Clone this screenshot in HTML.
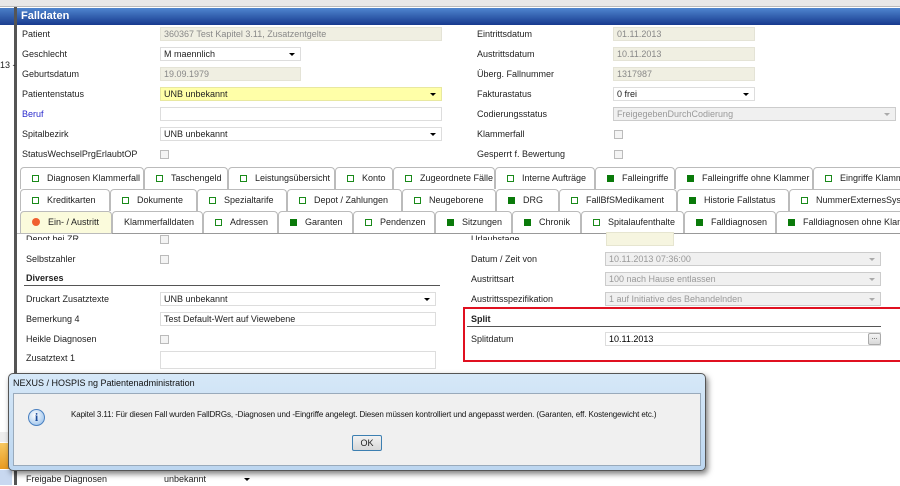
<!DOCTYPE html>
<html><head><style>
*{box-sizing:border-box;margin:0;padding:0}
body{width:900px;height:485px;overflow:hidden;background:#fff;font-family:"Liberation Sans",sans-serif;font-size:9px;color:#222;position:relative}
.a{position:absolute;white-space:nowrap}
.inp{position:absolute;height:14px;border:1px solid #ddd;background:#fff;padding:1px 3px;font-size:9px;line-height:11px}
.ro{background:#f0efe2;color:#888;border-color:#e4e3d6}
.dis{background:#f0f0f0;color:#999;border-color:#ccc}
.arr::after{content:"";position:absolute;right:5px;top:5px;border:3px solid transparent;border-top:3px solid #000;border-bottom:0}
.dis.arr::after{border-top-color:#aaa}
.cb{position:absolute;width:9px;height:9px;border:1px solid #bbb;background:#f4f4f4}
.tab{position:absolute;height:22px;border:1px solid #bbb;border-bottom:none;border-radius:4px 4px 0 0;background:#fff;font-size:9px;line-height:21px;white-space:nowrap;overflow:hidden}
.tab i{display:inline-block;width:7px;height:7px;border:1.5px solid #1a8a1a;margin:0 8px 0 11px;vertical-align:-1px}
.tab i.f{background:#0a7a0a;border-color:#0a7a0a}
</style></head><body>
<div class="a" style="left:0;top:0;width:900px;height:7px;background:#e8e8e8;border-bottom:1px solid #bbb"></div>
<div class="a" style="left:0;top:8px;width:14px;height:17px;background:linear-gradient(#4a7fc8,#1c3f8f)"></div>
<div class="a" style="left:14px;top:7px;width:3px;height:478px;background:#555"></div>
<div class="a" style="left:17px;top:8px;width:883px;height:17px;background:linear-gradient(#4f86cf,#173a8e);color:#fff;font-weight:bold;font-size:11px;padding:2px 4px">Falldaten</div>
<div class="a" style="left:0;top:60px;font-size:9px">13 -</div>

<div class="a" style="left:22px;top:29px">Patient</div><div class="inp ro" style="left:160px;top:27px;width:282px">360367 Test Kapitel 3.11,  Zusatzentgelte</div>
<div class="a" style="left:22px;top:49px">Geschlecht</div><div class="inp arr" style="left:160px;top:47px;width:141px">M maennlich</div>
<div class="a" style="left:22px;top:69px">Geburtsdatum</div><div class="inp ro" style="left:160px;top:67px;width:141px">19.09.1979</div>
<div class="a" style="left:22px;top:89px">Patientenstatus</div><div class="inp arr" style="left:160px;top:87px;width:282px;background:#ffffa8;border-color:#e8e8a0">UNB unbekannt</div>
<div class="a" style="left:22px;top:109px;color:#2a2acc">Beruf</div><div class="inp" style="left:160px;top:107px;width:282px"></div>
<div class="a" style="left:22px;top:129px">Spitalbezirk</div><div class="inp arr" style="left:160px;top:127px;width:282px">UNB unbekannt</div>
<div class="a" style="left:22px;top:149px">StatusWechselPrgErlaubtOP</div><div class="cb" style="left:160px;top:150px"></div>

<div class="a" style="left:477px;top:29px">Eintrittsdatum</div><div class="inp ro" style="left:613px;top:27px;width:142px">01.11.2013</div>
<div class="a" style="left:477px;top:49px">Austrittsdatum</div><div class="inp ro" style="left:613px;top:47px;width:142px">10.11.2013</div>
<div class="a" style="left:477px;top:69px">Überg. Fallnummer</div><div class="inp ro" style="left:613px;top:67px;width:142px">1317987</div>
<div class="a" style="left:477px;top:89px">Fakturastatus</div><div class="inp arr" style="left:613px;top:87px;width:142px">0 frei</div>
<div class="a" style="left:477px;top:109px">Codierungsstatus</div><div class="inp dis arr" style="left:613px;top:107px;width:283px">FreigegebenDurchCodierung</div>
<div class="a" style="left:477px;top:129px">Klammerfall</div><div class="cb" style="left:614px;top:130px"></div>
<div class="a" style="left:477px;top:149px">Gesperrt f. Bewertung</div><div class="cb" style="left:614px;top:150px"></div>

<div class="tab" style="left:20px;top:167px;width:124px"><i></i>Diagnosen Klammerfall</div>
<div class="tab" style="left:144px;top:167px;width:84px"><i></i>Taschengeld</div>
<div class="tab" style="left:228px;top:167px;width:107px"><i></i>Leistungsübersicht</div>
<div class="tab" style="left:335px;top:167px;width:58px"><i></i>Konto</div>
<div class="tab" style="left:393px;top:167px;width:102px"><i></i>Zugeordnete Fälle</div>
<div class="tab" style="left:495px;top:167px;width:100px"><i></i>Interne Aufträge</div>
<div class="tab" style="left:595px;top:167px;width:80px"><i class="f"></i>Falleingriffe</div>
<div class="tab" style="left:675px;top:167px;width:138px"><i class="f"></i>Falleingriffe ohne Klammer</div>
<div class="tab" style="left:813px;top:167px;width:95px"><i></i>Eingriffe Klammer</div>
<div class="tab" style="left:20px;top:189px;width:90px"><i></i>Kreditkarten</div>
<div class="tab" style="left:110px;top:189px;width:87px"><i></i>Dokumente</div>
<div class="tab" style="left:197px;top:189px;width:90px"><i></i>Spezialtarife</div>
<div class="tab" style="left:287px;top:189px;width:115px"><i></i>Depot / Zahlungen</div>
<div class="tab" style="left:402px;top:189px;width:94px"><i></i>Neugeborene</div>
<div class="tab" style="left:496px;top:189px;width:63px"><i class="f"></i>DRG</div>
<div class="tab" style="left:559px;top:189px;width:118px"><i></i>FallBfSMedikament</div>
<div class="tab" style="left:677px;top:189px;width:112px"><i class="f"></i>Historie Fallstatus</div>
<div class="tab" style="left:789px;top:189px;width:120px"><i></i>NummerExternesSystem</div>
<div class="tab" style="left:20px;top:211px;width:92px;background:#fbfbdc;height:23px"><i style="border:none;background:#f06030;border-radius:50%;width:8px;height:8px"></i>Ein- / Austritt</div>
<div class="tab" style="left:112px;top:211px;width:91px;padding-left:11px">Klammerfalldaten</div>
<div class="tab" style="left:203px;top:211px;width:75px"><i></i>Adressen</div>
<div class="tab" style="left:278px;top:211px;width:75px"><i class="f"></i>Garanten</div>
<div class="tab" style="left:353px;top:211px;width:82px"><i></i>Pendenzen</div>
<div class="tab" style="left:435px;top:211px;width:77px"><i class="f"></i>Sitzungen</div>
<div class="tab" style="left:512px;top:211px;width:69px"><i class="f"></i>Chronik</div>
<div class="tab" style="left:581px;top:211px;width:103px"><i></i>Spitalaufenthalte</div>
<div class="tab" style="left:684px;top:211px;width:92px"><i class="f"></i>Falldiagnosen</div>
<div class="tab" style="left:776px;top:211px;width:130px"><i class="f"></i>Falldiagnosen ohne Klammer</div>
<div class="a" style="left:17px;top:233px;width:883px;height:1px;background:#bbb"></div>
<div class="a" style="left:112px;top:233px;width:788px;height:1px;background:#999"></div>

<div class="a" style="left:26px;top:234px;height:6px;overflow:hidden">Depot bei ZR</div><div class="cb" style="left:160px;top:235px"></div>
<div class="a" style="left:26px;top:254px">Selbstzahler</div><div class="cb" style="left:160px;top:255px"></div>
<div class="a" style="left:26px;top:273px;font-weight:bold">Diverses</div>
<div class="a" style="left:24px;top:285px;width:416px;height:1px;background:#555"></div>
<div class="a" style="left:26px;top:294px">Druckart Zusatztexte</div><div class="inp arr" style="left:160px;top:292px;width:276px">UNB unbekannt</div>
<div class="a" style="left:26px;top:314px">Bemerkung 4</div><div class="inp" style="left:160px;top:312px;width:276px">Test Default-Wert auf Viewebene</div>
<div class="a" style="left:26px;top:334px">Heikle Diagnosen</div><div class="cb" style="left:160px;top:335px"></div>
<div class="a" style="left:26px;top:353px">Zusatztext 1</div><div class="inp" style="left:160px;top:351px;width:276px;height:18px"></div>

<div class="inp" style="left:606px;top:232px;width:68px;height:14px;background:#f6f5e0;border-color:#e6e5d0"></div>
<div class="a" style="left:471px;top:234px;height:6px;overflow:hidden">Urlaubstage</div>
<div class="a" style="left:471px;top:254px">Datum / Zeit von</div><div class="inp dis arr" style="left:605px;top:252px;width:276px">10.11.2013 07:36:00</div>
<div class="a" style="left:471px;top:274px">Austrittsart</div><div class="inp dis arr" style="left:605px;top:272px;width:276px">100 nach Hause entlassen</div>
<div class="a" style="left:471px;top:294px">Austrittsspezifikation</div><div class="inp dis arr" style="left:605px;top:292px;width:276px">1 auf Initiative des Behandelnden</div>
<div class="a" style="left:463px;top:307px;width:440px;height:55px;border:2px solid #e01020"></div>
<div class="a" style="left:471px;top:314px;font-weight:bold">Split</div>
<div class="a" style="left:467px;top:326px;width:414px;height:1px;background:#555"></div>
<div class="a" style="left:471px;top:334px">Splitdatum</div><div class="inp" style="left:605px;top:332px;width:276px;color:#000">10.11.2013</div>
<div class="a" style="left:868px;top:333px;width:13px;height:12px;border:1px solid #aaa;border-radius:2px;background:linear-gradient(#f4f4f4,#d8d8d8);font-size:7px;text-align:center;line-height:8px">...</div>

<div class="a" style="left:0;top:432px;width:14px;height:10px;background:#eee"></div>
<div class="a" style="left:0;top:443px;width:12px;height:26px;background:linear-gradient(#f8c860,#e89a20)"></div>
<div class="a" style="left:0;top:470px;width:12px;height:15px;background:#c8d8f0"></div>
<div class="a" style="left:26px;top:474px">Freigabe Diagnosen</div><div class="inp arr" style="left:160px;top:472px;width:96px;border-color:#fff">unbekannt</div>

<div class="a" style="left:8px;top:373px;width:698px;height:98px;border:1px solid #555;border-radius:5px;background:linear-gradient(#d6e8f8,#bcd6f0);box-shadow:2px 3px 6px rgba(0,0,0,.5)">
 <div class="a" style="left:4px;top:4px;font-size:9px;color:#111">NEXUS / HOSPIS ng Patientenadministration</div>
 <div class="a" style="left:4px;top:19px;width:688px;height:73px;background:#f0f0f0;border:1px solid #9ab">
  <div class="a" style="left:14px;top:15px;width:17px;height:17px;border-radius:50%;background:radial-gradient(circle at 40% 35%,#fff,#8ab8e8);border:1px solid #4a80c0;color:#1a4a9a;font:bold 12px 'Liberation Serif',serif;text-align:center;line-height:15px">i</div>
  <div class="a" style="left:57px;top:16px;font-size:8px;letter-spacing:-0.1px;color:#111">Kapitel 3.11: Für diesen Fall wurden FallDRGs, -Diagnosen und -Eingriffe angelegt. Diesen müssen kontrolliert und angepasst werden. (Garanten, eff. Kostengewicht etc.)</div>
  <div class="a" style="left:338px;top:41px;width:30px;height:16px;border:1px solid #3c7fb1;border-radius:2px;background:linear-gradient(#f2f2f2,#d8d8d8);text-align:center;line-height:14px;font-size:9px">OK</div>
 </div>
</div>
</body></html>
